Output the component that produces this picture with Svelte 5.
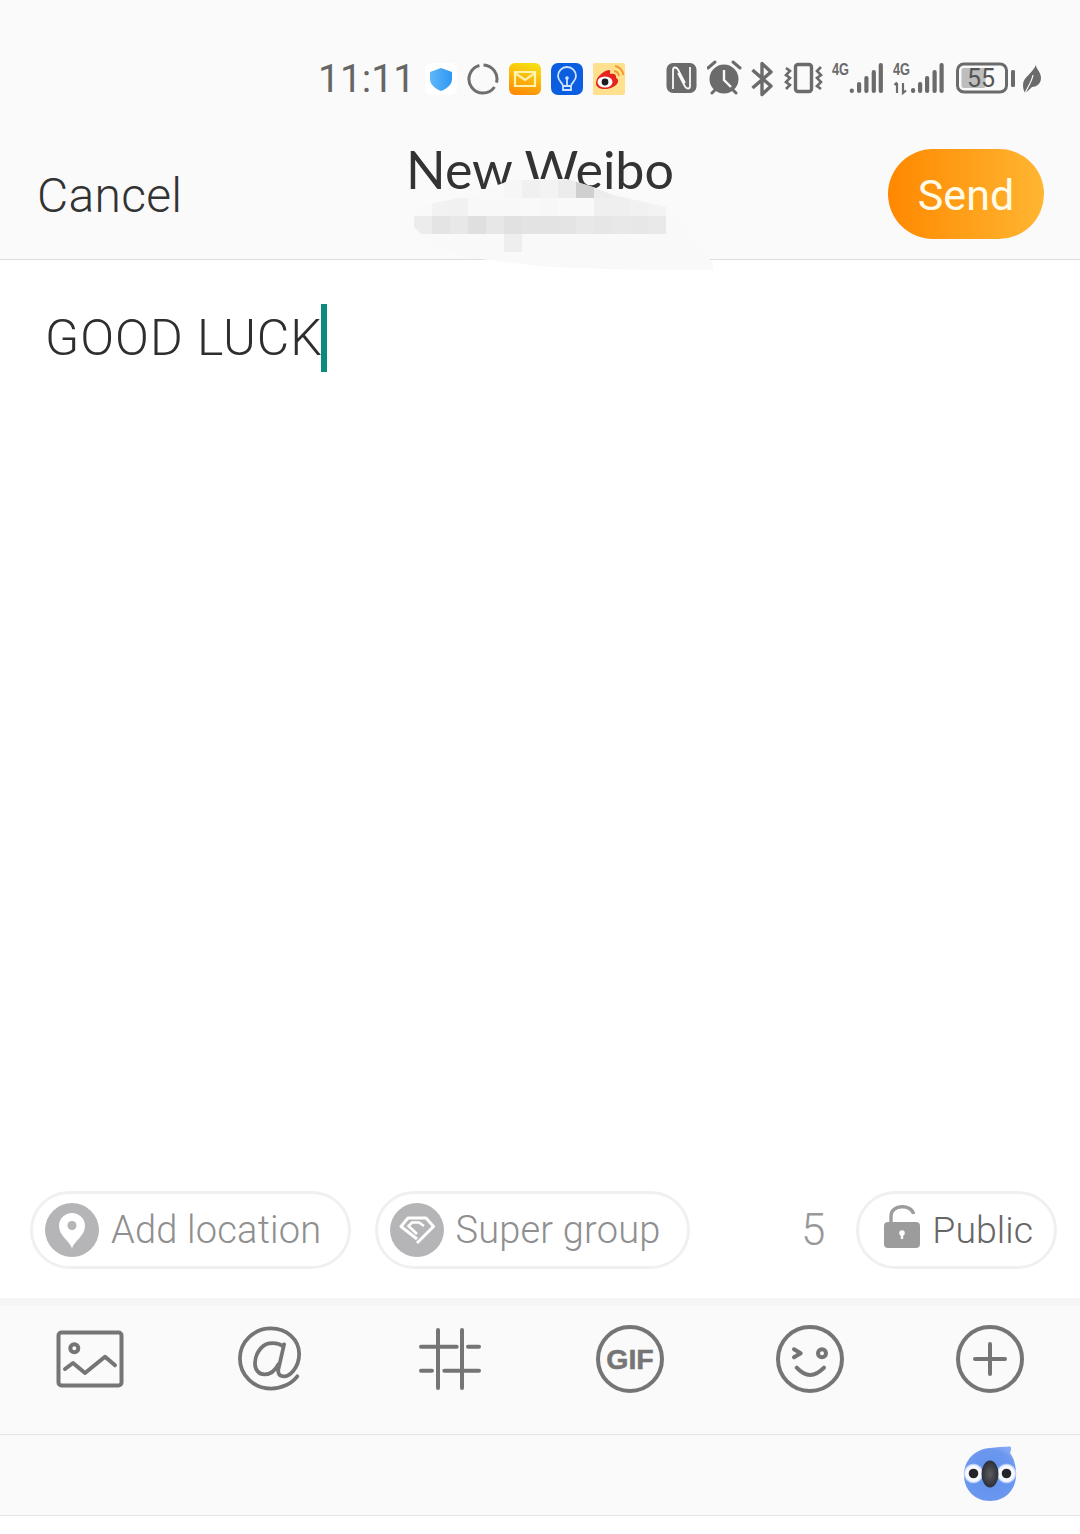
<script>
  const x0 = 414, size = 18;
  const rows = [
    { y: 180, start: 504, cols: ['#f6f6f6','#f0f0f0','#f3f3f3','#ececec','#cfcfcf','#ececec','#efefef'] },
    { y: 198, start: 432, cols: ['#f2f2f2','#f1f1f1','#f8f8f8','#f8f8f8','#f8f8f8','#f9f9f9','#f7f7f7','#f9f9f9','#f9f9f9','#efefef','#efefef','#f1f1f1','#f3f3f3'] },
    { y: 216, start: 414, cols: ['#ececec','#e4e4e4','#e8e8e8','#dfdfdf','#e7e7e7','#e1e1e1','#e3e3e3','#e3e3e3','#e4e4e4','#e8e8e8','#e6e6e6','#e8e8e8','#e7e7e7','#e9e9e9'] },
    { y: 234, start: 504, cols: ['#eeeeee'] }
  ];
  const tiles = rows.flatMap((r) => r.cols.map((fill, i) => ({ x: r.start + i * size - x0 + 14, y: r.y - 170, fill })));
  const bars1 = [[19.7, 4.5], [27, 11], [34.3, 17], [41.7, 23], [48.7, 30]];
  const bars2 = [[20, 5], [27, 11], [34, 17], [41.5, 23], [48.5, 30]];
</script>

<div class="page">
  <header class="top">
    <div class="status">
      <span class="time">11:11</span>
      <div class="apps">
        <svg width="32" height="32" viewBox="0 0 32 32">
          <defs><linearGradient id="sh" x1="0" x2="1"><stop offset="0" stop-color="#5fb7f8"/><stop offset="1" stop-color="#2f97f3"/></linearGradient></defs>
          <rect width="32" height="32" rx="6" fill="#fff"/>
          <path d="M16 5 L27 9 V16 C27 22 21 26 16 28 C11 26 5 22 5 16 V9 Z" fill="url(#sh)"/>
        </svg>
        <svg width="32" height="32" viewBox="0 0 32 32">
          <path d="M16.500 2 A14 14 0 0 1 29.500 19.600 M27.500 24 A14 14 0 1 1 12.400 2.500" fill="none" stroke="#6f6f6f" stroke-width="3"/>
        </svg>
        <svg width="32" height="32" viewBox="0 0 32 32">
          <defs><linearGradient id="ml" x1="0.600" y1="0" x2="0.300" y2="1"><stop offset="0" stop-color="#f7de12"/><stop offset="1" stop-color="#ff8a06"/></linearGradient></defs>
          <rect width="32" height="32" rx="6" fill="url(#ml)"/>
          <path d="M6 9 H26 V23 H6 Z M6 10 L16 17 L26 10" fill="none" stroke="#fff3b0" stroke-width="2.200"/>
        </svg>
        <svg width="32" height="32" viewBox="0 0 32 32">
          <rect width="32" height="32" rx="7" fill="#0b5ee0"/>
          <path d="M12 23 C12 20 7 18 7 13 A9 9 0 0 1 25 13 C25 18 20 20 20 23 V27 H12 Z M12 23 H20 M16 23 V15" fill="none" stroke="#cfe2ff" stroke-width="1.800"/>
          <circle cx="16" cy="15" r="1.800" fill="#cfe2ff"/>
        </svg>
        <svg width="32" height="32" viewBox="0 0 32 32">
          <rect width="32" height="32" rx="2" fill="#ffe08e"/>
          <path d="M3 20 C3 14 10 8 16 7 C18 7 17 10 17 11 C20 10 24 11 23 15 C27 16 26 24 14 26 C8 26.500 3 25 3 20 Z" fill="#e3241f"/>
          <ellipse cx="12" cy="19" rx="7.500" ry="5.500" fill="#fff"/>
          <circle cx="12" cy="19" r="3.400" fill="#1e1e1e"/>
          <path d="M21 8 A6 6 0 0 1 26 13 M22 3 A11 11 0 0 1 30.500 12" fill="none" stroke="#f09a2d" stroke-width="2"/>
        </svg>
      </div>
      <div class="sys">
        <svg width="41" height="44" viewBox="0 0 41 44">
          <rect x="0.500" y="6" width="30" height="30" rx="6.500" fill="#6b6b6b"/>
          <path d="M7 32 V13 C7 10 10 9.500 12 12.500 L19 26 M24 10 V29 C24 32 21 32.500 19 29.500 L12 16" fill="none" stroke="#fafafa" stroke-width="1.800"/>
        </svg>
        <svg width="44" height="44" viewBox="0 0 44 44">
          <circle cx="17" cy="22" r="14.500" fill="#6b6b6b"/>
          <path d="M17 13 V23 L24 30" fill="none" stroke="#fafafa" stroke-width="2.400"/>
          <path d="M1 11 L8 5 M26 5 L33 11 M5 36 L8 33 M26 33 L29 36" stroke="#6b6b6b" stroke-width="3" stroke-linecap="round"/>
        </svg>
        <svg width="33" height="44" viewBox="0 0 33 44">
          <path d="M1.500 13 L20 29 L11 37.500 V6.500 L20 15 L1.500 31" fill="none" stroke="#6b6b6b" stroke-width="3.400" stroke-linejoin="round"/>
        </svg>
        <svg width="48" height="44" viewBox="0 0 48 44">
          <rect x="11.500" y="7.500" width="16" height="27" rx="2.500" fill="none" stroke="#6b6b6b" stroke-width="3.400"/>
          <path d="M2 11 L6 14 L2 18 L6 21 L2 25 L6 28 L2 32 M37 10 L33 14 L37 18 L33 21 L37 25 L33 29 L37 32" fill="none" stroke="#6b6b6b" stroke-width="2.600"/>
        </svg>
        <svg width="61" height="44" viewBox="0 0 61 44">
          <text class="g" x="0" y="18" textLength="17" lengthAdjust="spacingAndGlyphs">4G</text>
          {#each bars1 as [x, h]}
            <rect x={x - 2} y={36 - h} width="4.200" height={h} rx="2" fill="#6b6b6b"/>
          {/each}
        </svg>
        <svg width="63" height="44" viewBox="0 0 63 44">
          <text class="g" x="0" y="18" textLength="17" lengthAdjust="spacingAndGlyphs">4G</text>
          <path d="M4 26 V36 M1.500 28 L4 25.500 M10 26 V36 L13 33.500" fill="none" stroke="#6b6b6b" stroke-width="2.200"/>
          {#each bars2 as [x, h]}
            <rect x={x - 2} y={36 - h} width="4.200" height={h} rx="2" fill="#6b6b6b"/>
          {/each}
        </svg>
        <svg width="66" height="44" viewBox="0 0 66 44">
          <rect x="1.500" y="7" width="49" height="28" rx="6.500" fill="none" stroke="#6b6b6b" stroke-width="3"/>
          <rect x="5.500" y="11" width="24" height="20" rx="2" fill="#bdbdbd"/>
          <text class="pct" x="25" y="30" text-anchor="middle">55</text>
          <rect x="55" y="13" width="4" height="17" rx="1.500" fill="#6b6b6b"/>
        </svg>
        <svg width="20" height="44" viewBox="0 0 20 44">
          <path d="M14 8 C14 12 19 15 19 21 C19 27 14 30 10 30 C8 32 6 34 3 36 C2 34 1 32 1 28 C1 20 10 17 14 8 Z" fill="#6b6b6b"/>
          <path d="M3 36 C6 30 10 24 11 18" fill="none" stroke="#fafafa" stroke-width="1.200"/>
        </svg>
      </div>
    </div>
    <nav class="nav">
      <span class="cancel">Cancel</span>
      <h1 class="title">New Weibo</h1>
      <button class="send">Send</button>
    </nav>
    <svg class="mask" width="320" height="110" viewBox="0 0 320 110" aria-hidden="true">
      <defs>
        <clipPath id="blob"><path d="M14 50 C14 42 18 37 23 35 L60 28 L115 9 H167 L193 17 L213 25 L267 37 L313 93 V100 H247 L147 97 L63 87 L30 73 L14 57 Z"/></clipPath>
      </defs>
      <g clip-path="url(#blob)">
        <rect width="320" height="110" fill="#f9f9f9"/>
        {#each tiles as t}
          <rect x={t.x} y={t.y} width="18" height="18" fill={t.fill}/>
        {/each}
      </g>
    </svg>
  </header>

  <main class="editor">
    <div class="line"><span class="typed">GOOD LUCK</span><i class="caret"></i></div>
  </main>

  <section class="chips">
    <div class="chip first">
      <svg width="54" height="54" viewBox="0 0 54 54">
        <circle cx="27" cy="27" r="27" fill="#b5b5b8"/>
        <path d="M27 45.500 C25 38 14 33 14 23 A13 13 0 0 1 40 23 C40 33 29 38 27 45.500 Z" fill="#fff"/>
        <circle cx="27" cy="22.500" r="4.500" fill="#b5b5b8"/>
      </svg>
      <span>Add location</span>
    </div>
    <div class="chip second">
      <svg width="54" height="54" viewBox="0 0 54 54">
        <circle cx="27" cy="27" r="27" fill="#b5b5b8"/>
        <path d="M27 36 L11 23.500 L18 15 H36 L43.500 23.500 L27 40" fill="none" stroke="#fff" stroke-width="3" stroke-linejoin="round"/>
        <path d="M34 23 L29 19.500 H22 L18.500 23 L27 31" fill="none" stroke="#fff" stroke-width="2.600"/>
      </svg>
      <span>Super group</span>
    </div>
    <span class="count">5</span>
    <div class="chip third">
      <svg class="lock" width="36" height="44" viewBox="0 0 36 44">
        <path d="M7 18 V11 C7 -1 28 -1 29.500 9" fill="none" stroke="#9c9c9c" stroke-width="3.400"/>
        <rect y="17" width="36" height="26" rx="4" fill="#9c9c9c"/>
        <circle cx="18" cy="28" r="2.800" fill="#fff"/>
        <rect x="16.800" y="28" width="2.400" height="6" fill="#fff"/>
      </svg>
      <span>Public</span>
    </div>
  </section>

  <div class="rule"></div>

  <section class="tools">
    <svg width="80" height="80" viewBox="0 0 80 80">
      <rect x="8.500" y="13.500" width="63" height="53" rx="3" class="s"/>
      <circle cx="24.300" cy="29.300" r="4" class="s"/>
      <path d="M15 50 L23 44 L35 54 L55 37.700 L65 46.300" class="s"/>
    </svg>
    <svg width="80" height="80" viewBox="0 0 80 80">
      <path transform="translate(40 39.500) scale(0.940) translate(-40 -39)" d="M69 58 C63 66 52 71 41 71 C23 71 8 57 8 39 C8 21 23 7 41 7 C58 7 71 19 71 34 C71 50 60 58 55 58 C50 58 48 55 49 50 L55 24 M54 26 C50 23 44 22 39 23 C30 25 24 35 24 44 C24 51 28 56 34 56 C41 56 46 51 49 45" class="s"/>
    </svg>
    <svg width="80" height="80" viewBox="0 0 80 80">
      <path d="M28 11 V69 M52 11 V69 M11 27.700 H46.700 M58 27.700 H69 M11 51.700 H22 M34.300 51.700 H69" class="s"/>
    </svg>
    <svg width="80" height="80" viewBox="0 0 80 80">
      <circle cx="40" cy="40" r="32" class="s"/>
      <text class="gif" x="40" y="50" text-anchor="middle">GIF</text>
    </svg>
    <svg width="80" height="80" viewBox="0 0 80 80">
      <circle cx="40" cy="40" r="32" class="s"/>
      <path d="M24 30.300 L30.700 34.300 L24 38.300" class="s"/>
      <circle cx="52" cy="34.300" r="4" class="s"/>
      <path d="M26.700 48.700 Q40 63.300 54 48.700" class="s"/>
    </svg>
    <svg width="80" height="80" viewBox="0 0 80 80">
      <circle cx="40" cy="40" r="32" class="s"/>
      <path d="M25 40 H55 M40 25 V55" class="s"/>
    </svg>
  </section>

  <section class="assist">
    <svg width="60" height="60" viewBox="0 0 60 60">
      <defs>
        <radialGradient id="kb" cx="0.500" cy="0.550" r="0.600"><stop offset="0" stop-color="#5f92f0"/><stop offset="0.800" stop-color="#6b97ee"/><stop offset="1" stop-color="#86a8f3"/></radialGradient>
        <radialGradient id="ke"><stop offset="0.500" stop-color="#fff"/><stop offset="0.800" stop-color="#f2f5ff"/><stop offset="1" stop-color="#b9ccf8" stop-opacity="0.600"/></radialGradient>
        <radialGradient id="kn" cy="0.500"><stop offset="0" stop-color="#5c5c60"/><stop offset="1" stop-color="#2e3038"/></radialGradient>
      </defs>
      <path d="M30 3 C36 2 43 2 50 1.500 C52 2 51 6 50 8 C54 13 56 20 56 30 C56 45 45 56 30 56 C15 56 4 45 4 30 C4 15 15 4 30 3 Z" fill="url(#kb)"/>
      <circle cx="13.500" cy="28.500" r="10" fill="url(#ke)"/>
      <circle cx="46.500" cy="28.500" r="10" fill="url(#ke)"/>
      <circle cx="13.500" cy="28.500" r="4.800" fill="#25262b"/>
      <circle cx="46.500" cy="28.500" r="4.800" fill="#25262b"/>
      <ellipse cx="30" cy="29" rx="8.500" ry="13.500" fill="url(#kn)"/>
    </svg>
  </section>
</div>

<style>
  :global(body) {
    margin: 0;
    background: #fff;
  }
  .page {
    display: flex;
    flex-direction: column;
    width: 1080px;
    height: 1534px;
    padding-bottom: 18px;
    box-sizing: border-box;
    font-family: Roboto, "Noto Sans", sans-serif;
    font-weight: 300;
    overflow: hidden;
  }
  .top {
    position: relative;
    background: #fafafa;
  }
  .status {
    display: flex;
    align-items: center;
    height: 102px;
    padding: 28px 0 0 318px;
    color: #666;
  }
  .time {
    width: 107px;
    font-size: 39px;
    font-weight: 400;
  }
  .apps {
    display: flex;
    gap: 10px;
  }
  .sys {
    display: flex;
    align-items: center;
    margin-left: 41px;
  }
  .g {
    font: 700 16px "Liberation Sans", sans-serif;
    fill: #6b6b6b;
  }
  .pct {
    font: 400 25px Roboto, sans-serif;
    fill: #555;
  }
  .nav {
    display: grid;
    grid-template-columns: 1fr auto 1fr;
    align-items: center;
    height: 129px;
    border-bottom: 1px solid #dcdcdc;
  }
  .cancel {
    padding: 1px 0 0 37px;
    font-size: 48px;
    letter-spacing: 0.300px;
    color: #333;
  }
  .title {
    margin: 0 0 52px;
    font-family: Lato, sans-serif;
    font-size: 52px;
    font-weight: 400;
    line-height: 64px;
    color: #333;
  }
  .send {
    justify-self: end;
    width: 156px;
    height: 90px;
    margin: 0 36px 2px 0;
    padding: 3px 0 0;
    border: 0;
    border-radius: 45px;
    background: linear-gradient(90deg, #ff8800, #ffb632);
    color: #fffbe9;
    font-family: Roboto, sans-serif;
    font-size: 43px;
    font-weight: 400;
  }
  .mask {
    position: absolute;
    left: 400px;
    top: 170px;
  }
  .editor {
    flex: 1;
    padding: 44px 0 0 46px;
    background: #fff;
  }
  .line {
    display: flex;
    align-items: center;
    height: 68px;
  }
  .typed {
    font-size: 50px;
    letter-spacing: 1px;
    margin-left: -1px;
    color: #2e2e2e;
  }
  .caret {
    width: 6px;
    height: 68px;
    margin-left: -2px;
    background: #0b8a7d;
  }
  .chips {
    display: flex;
    align-items: center;
    height: 78px;
    padding: 0 23px 29px 30px;
    background: #fff;
  }
  .chip {
    display: flex;
    align-items: center;
    gap: 12px;
    height: 78px;
    box-sizing: border-box;
    padding: 0 27px 0 12px;
    border: 3px solid #f0f0f0;
    border-radius: 39px;
    font-size: 38px;
    letter-spacing: 0.200px;
    color: #8f8f8f;
  }
  .second {
    margin-left: 24px;
    gap: 11px;
    padding-right: 26px;
  }
  .third {
    gap: 12px;
    padding: 0 21px 0 25px;
    font-size: 37.500px;
    letter-spacing: 0;
    color: #666;
  }
  .lock {
    margin-bottom: 6px;
  }
  .count {
    margin: 0 31px 0 auto;
    font-size: 44px;
    color: #999;
  }
  .rule {
    height: 8px;
    background: #f5f5f5;
  }
  .tools {
    display: grid;
    grid-template-columns: repeat(6, 180px);
    justify-items: center;
    align-items: center;
    height: 106px;
    padding-bottom: 22px;
    background: #fafafa;
    border-bottom: 1px solid #e4e4e4;
  }
  .s {
    fill: none;
    stroke: #757575;
    stroke-width: 4;
    stroke-linecap: round;
    stroke-linejoin: round;
  }
  .gif {
    font: 700 28.500px "Liberation Sans", sans-serif;
    fill: #757575;
    stroke: #757575;
    stroke-width: 0.500;
  }
  .assist {
    display: flex;
    justify-content: flex-end;
    align-items: center;
    height: 80px;
    padding-right: 60px;
    background: #fafafa;
    border-bottom: 1px solid #e4e4e4;
  }
</style>
